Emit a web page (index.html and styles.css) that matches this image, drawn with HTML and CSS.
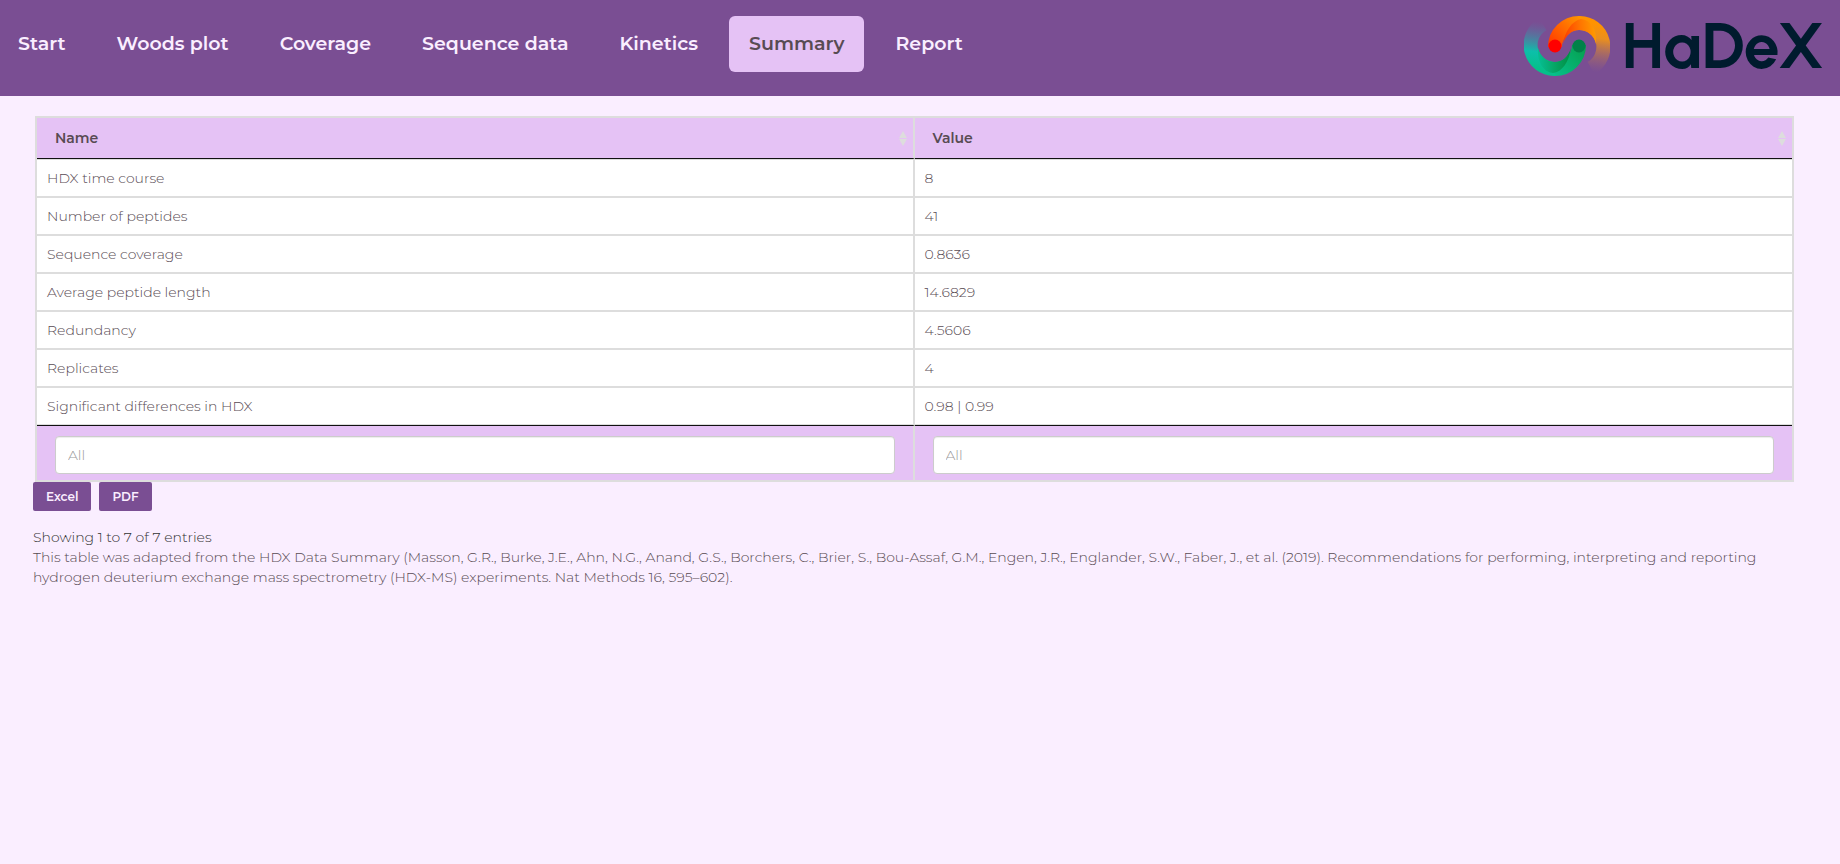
FILE: index.html
```html
<!DOCTYPE html>
<html lang="en">
<head>
<meta charset="utf-8">
<meta name="viewport" content="width=device-width, initial-scale=1">
<title>HaDeX</title>
<link rel="stylesheet" href="styles.css">
</head>
<body>
<header class="topbar">
  <nav class="tabs" aria-label="Main">
    <a class="tab" href="#start">Start</a>
    <a class="tab" href="#woods">Woods plot</a>
    <a class="tab" href="#coverage">Coverage</a>
    <a class="tab" href="#sequence">Sequence data</a>
    <a class="tab" href="#kinetics">Kinetics</a>
    <a class="tab tab-active" href="#summary" aria-current="page">Summary</a>
    <a class="tab" href="#report">Report</a>
  </nav>
  <a class="brand" href="#start">
    <svg class="brand-mark" viewBox="0 0 86 60" aria-hidden="true">
      <defs>
        <linearGradient id="warm" gradientUnits="userSpaceOnUse" x1="26" y1="28" x2="54" y2="0">
          <stop offset="0" stop-color="#ff3b00"/><stop offset="1" stop-color="#ff9300"/>
        </linearGradient>
        <linearGradient id="warmFade" gradientUnits="userSpaceOnUse" x1="76" y1="8" x2="70" y2="56">
          <stop offset="0" stop-color="#ff9300"/><stop offset=".3" stop-color="#ea8f1e"/><stop offset="1" stop-color="#a06a70" stop-opacity="0"/>
        </linearGradient>
        <linearGradient id="warmDeep" gradientUnits="userSpaceOnUse" x1="40" y1="20" x2="74" y2="16">
          <stop offset="0" stop-color="#ff3d00"/><stop offset=".5" stop-color="#ff7400"/><stop offset="1" stop-color="#ffa000"/>
        </linearGradient>
        <linearGradient id="cool" gradientUnits="userSpaceOnUse" x1="60" y1="32" x2="30" y2="60">
          <stop offset="0" stop-color="#06a050"/><stop offset="1" stop-color="#06c08a"/>
        </linearGradient>
        <linearGradient id="coolFade" gradientUnits="userSpaceOnUse" x1="10" y1="52" x2="16" y2="6">
          <stop offset="0" stop-color="#06c08a"/><stop offset=".35" stop-color="#0cbfaa"/><stop offset="1" stop-color="#537ba8" stop-opacity="0"/>
        </linearGradient>
        <linearGradient id="coolDeep" gradientUnits="userSpaceOnUse" x1="46" y1="42" x2="12" y2="44">
          <stop offset="0" stop-color="#009044"/><stop offset=".5" stop-color="#06a868"/><stop offset="1" stop-color="#06c09a"/>
        </linearGradient>
      </defs>
      <path d="M54 7H55A24 24 0 0 1 67 52" fill="none" stroke="url(#warmFade)" stroke-width="14"/>
      <path d="M31 31A24 24 0 0 1 55 7" fill="none" stroke="url(#warm)" stroke-width="14"/>
      <path d="M39 28C41 15 48 5 57 3C67 4 73 13 72 28C70 19 63 14 55 14C48 14 42 19 39 28Z" fill="url(#warmDeep)"/>
      <path d="M32 53H31A24 24 0 0 1 19 8" fill="none" stroke="url(#coolFade)" stroke-width="14"/>
      <path d="M55 29A24 24 0 0 1 31 53" fill="none" stroke="url(#cool)" stroke-width="14"/>
      <path d="M47 32C45 46 38 56 29 57C19 56 13 46 14 32C17 42 24 46 31 46C38 46 44 41 47 32Z" fill="url(#coolDeep)"/>
      <circle cx="31" cy="30" r="6.5" fill="#f00"/>
      <circle cx="55" cy="30" r="6.5" fill="#008148"/>
    </svg>
    <span class="brand-name">HaDeX</span>
  </a>
</header>
<main class="content">
  <table class="summary">
    <thead>
      <tr>
        <th scope="col"><button class="sort" type="button">Name<svg class="sort-icon" viewBox="0 0 8 15" aria-hidden="true"><path d="M0 7L4 0L8 7ZM0 8H8L4 15Z"/></svg></button></th>
        <th scope="col"><button class="sort" type="button">Value<svg class="sort-icon" viewBox="0 0 8 15" aria-hidden="true"><path d="M0 7L4 0L8 7ZM0 8H8L4 15Z"/></svg></button></th>
      </tr>
    </thead>
    <tbody>
      <tr><td>HDX time course</td><td>8</td></tr>
      <tr><td>Number of peptides</td><td>41</td></tr>
      <tr><td>Sequence coverage</td><td>0.8636</td></tr>
      <tr><td>Average peptide length</td><td>14.6829</td></tr>
      <tr><td>Redundancy</td><td>4.5606</td></tr>
      <tr><td>Replicates</td><td>4</td></tr>
      <tr><td>Significant differences in HDX</td><td>0.98 | 0.99</td></tr>
    </tbody>
    <tfoot>
      <tr>
        <td><input class="filter" type="search" placeholder="All" aria-label="Filter by name"></td>
        <td><input class="filter" type="search" placeholder="All" aria-label="Filter by value"></td>
      </tr>
    </tfoot>
  </table>
  <div class="exports">
    <button class="export" type="button">Excel</button>
    <button class="export" type="button">PDF</button>
  </div>
  <p class="info">Showing 1 to 7 of 7 entries</p>
  <p class="note">This table was adapted from the HDX Data Summary (Masson, G.R., Burke, J.E., Ahn, N.G., Anand, G.S., Borchers, C., Brier, S., Bou-Assaf, G.M., Engen, J.R., Englander, S.W., Faber, J., et al. (2019). Recommendations for performing, interpreting and reporting hydrogen deuterium exchange mass spectrometry (HDX-MS) experiments. Nat Methods 16, 595–602).</p>
</main>
</body>
</html>
```
FILE: styles.css
```css
* {
  box-sizing: border-box;
}

body {
  margin: 0;
  background: #faeeff;
  color: #584b53;
  font-family: Montserrat, Inter, "Open Sans", sans-serif;
  font-size: 14px;
  font-weight: 300;
  line-height: 20px;
}

.topbar {
  display: flex;
  align-items: flex-start;
  justify-content: space-between;
  min-height: 96px;
  padding: 16px 16px 0 0;
  background: #7a4e93;
}

.tabs {
  display: flex;
  gap: 11px;
}

.tab {
  padding: 18px 20px;
  border-radius: 6px;
  color: #faeeff;
  font-size: 19px;
  font-weight: 600;
  line-height: 20px;
  text-decoration: none;
  white-space: nowrap;
}

.tab:first-child {
  padding-left: 18px;
}

.tab-active {
  background: #e5c2f5;
  color: #584b53;
}

.brand {
  display: flex;
  align-items: center;
  gap: 12px;
  color: #001b2e;
  text-decoration: none;
}

.brand-mark {
  width: 86px;
  height: 60px;
}

.brand-name {
  font-family: Urbanist, Outfit, Lato, sans-serif;
  font-size: 64px;
  font-weight: 700;
  line-height: 60px;
}

.content {
  padding: 20px 46px 0 33px;
}

.summary {
  width: calc(100% - 2px);
  margin-left: 2px;
  border: 2px solid #ddd;
  border-spacing: 0;
  table-layout: fixed;
}

.summary th,
.summary td {
  text-align: left;
}

.summary th:first-child,
.summary td:first-child {
  border-right: 2px solid #ddd;
}

.summary th {
  padding: 0;
  border-bottom: 1px solid #111;
  background: #e5c2f5;
}

.sort {
  display: flex;
  align-items: center;
  justify-content: space-between;
  width: 100%;
  padding: 10px 6px 10px 18px;
  border: 0;
  background: none;
  color: #584b53;
  font: inherit;
  font-size: 14px;
  font-weight: 600;
  line-height: 20px;
}

.sort-icon {
  width: 8px;
  height: 15px;
  fill: #ddd;
}

.summary tbody td {
  padding: 8px 10px;
  border-bottom: 2px solid #ddd;
  background: #fff;
}

.summary tbody tr:first-child td {
  border-top: 1px solid #ddd;
}

.summary tbody tr:last-child td {
  border-bottom-width: 1px;
}

.summary tfoot td {
  padding: 10px 18px 6px;
  border-top: 1px solid #111;
  background: #e5c2f5;
}

.filter {
  display: block;
  width: 100%;
  height: 38px;
  padding: 6px 12px;
  border: 1px solid #ccc;
  border-radius: 4px;
  background: #fff;
  box-shadow: inset 0 1px 1px rgba(0, 0, 0, 0.075);
  color: #584b53;
  font: inherit;
  appearance: none;
}

.filter::placeholder {
  color: #999;
}

.exports {
  display: flex;
  gap: 8px;
  margin-bottom: 16px;
}

.export {
  padding: 5px 13px 4px;
  border: 0;
  border-radius: 2px;
  background: #7a4e93;
  color: #faeeff;
  font: inherit;
  font-size: 12px;
  font-weight: 600;
  line-height: 20px;
}

.info,
.note {
  margin: 0;
}

.info {
  color: #333;
}
```
